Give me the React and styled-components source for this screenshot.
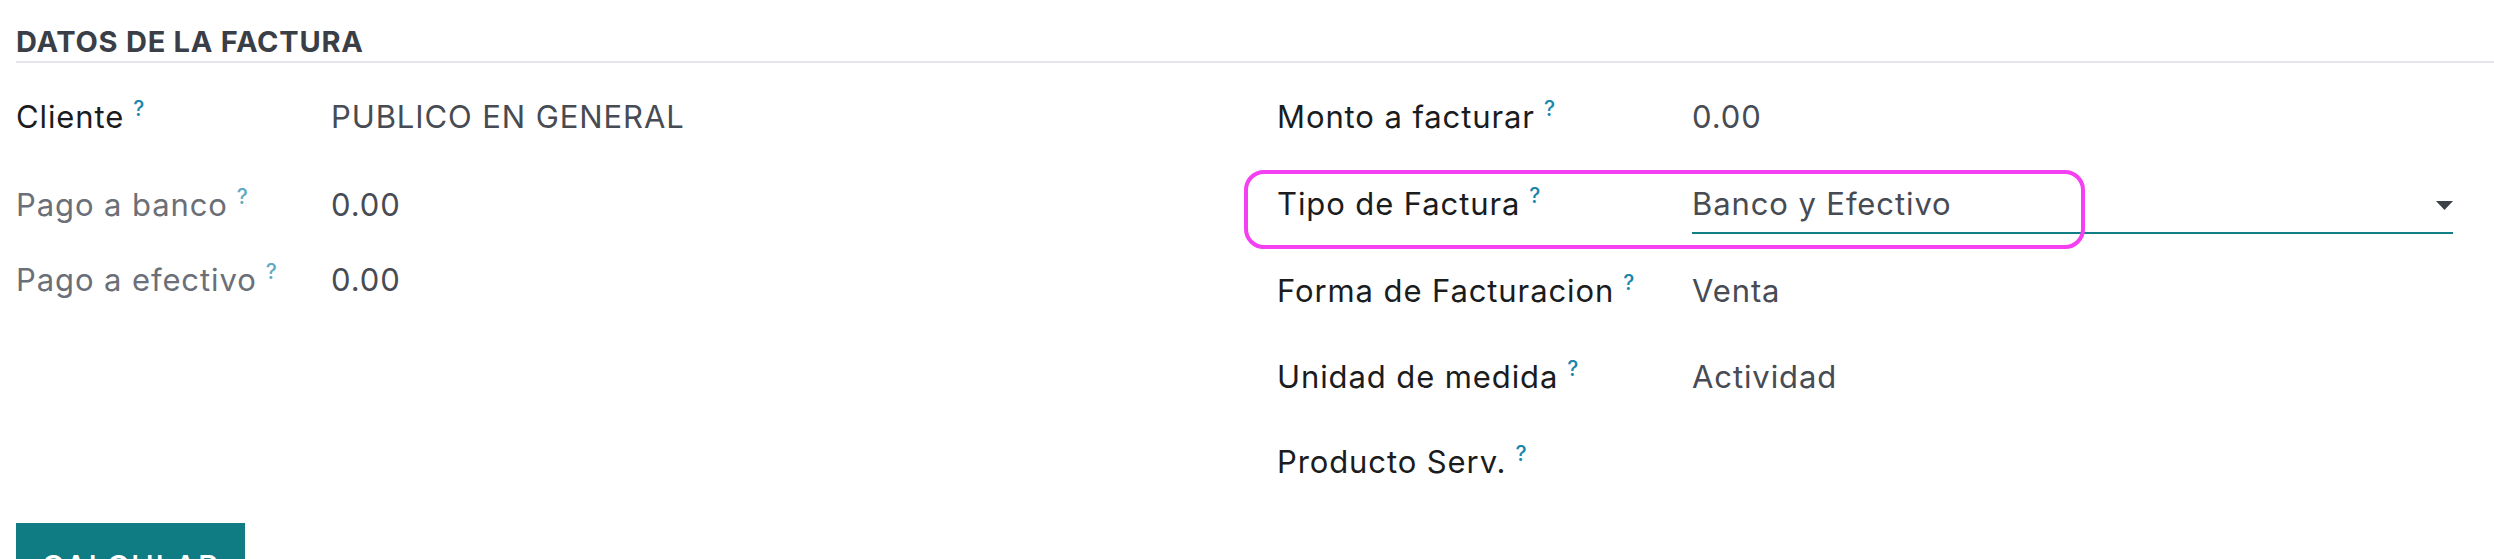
import React from 'react';
import styled, { createGlobalStyle } from 'styled-components';

const GlobalStyle = createGlobalStyle`
    body {
        margin: 0;
        background: #ffffff;
        font-family: Inter, "Noto Sans", sans-serif;
    }
`

const Page = styled.div`
    padding-left: 16px;
`

const SeparatorTitle = styled.div`
    padding-top: 24px;
    font-size: 29px;
    line-height: 35px;
    font-weight: 700;
    letter-spacing: 0.75px;
    color: #3a3e46;
    text-transform: uppercase;
`

const SeparatorLine = styled.div`
    height: 2px;
    margin-top: 2px;
    background: #e4e6e9;
`

const Groups = styled.div`
    display: grid;
    grid-template-columns: 1261px 1fr;
    padding-top: 36px;
    padding-right: 41px;
`

const Group = styled.div`
    display: flex;
    flex-direction: column;
    position: relative;
`

const Row = styled.div`
    display: grid;
    grid-template-columns: ${p => p.$labelWidth}px 1fr;
    align-items: start;
    height: ${p => p.$h}px;
    position: relative;
`

const Label = styled.div`
    font-size: 31px;
    line-height: 36px;
    letter-spacing: 0.9px;
    color: ${p => (p.$muted ? '#6b6f77' : '#1a1c20')};
    white-space: nowrap;
`

const Help = styled.sup`
    font-size: 21px;
    font-weight: 500;
    line-height: 0;
    vertical-align: 12px;
    margin-left: 9px;
    letter-spacing: 0;
    color: ${p => (p.$muted ? '#62aac4' : '#1a86ac')};
`

const Value = styled.div`
    font-size: 31px;
    line-height: 36px;
    letter-spacing: 0.9px;
    color: #474b53;
    white-space: nowrap;
`

const Select = styled.div`
    display: flex;
    justify-content: space-between;
    align-items: flex-start;
    padding-bottom: 10px;
    border-bottom: 2px solid #127f86;
`

const Arrow = styled.svg`
    width: 17px;
    height: 9px;
    margin-top: 15px;
    fill: #3c4047;
`

const Highlight = styled.div`
    position: absolute;
    left: -33px;
    top: -16px;
    width: 841px;
    height: 79px;
    box-sizing: border-box;
    border: 4px solid #f43ff2;
    border-radius: 20px;
    pointer-events: none;
`

const Button = styled.button`
    display: block;
    width: 229px;
    height: 70px;
    margin-top: 29px;
    padding: 17px 0 0;
    border: none;
    background: #0f7c84;
    color: #ffffff;
    font-family: Inter, "Noto Sans", sans-serif;
    font-size: 31px;
    font-weight: 500;
    letter-spacing: 1.5px;
    line-height: 36px;
    text-align: center;
    text-transform: uppercase;
`

const leftFields = [
    { label: 'Cliente', value: 'PUBLICO EN GENERAL', h: 88 },
    { label: 'Pago a banco', value: '0.00', h: 75, muted: true },
    { label: 'Pago a efectivo', value: '0.00', h: 75, muted: true },
];

const rightFields = [
    { label: 'Monto a facturar', value: '0.00', h: 87 },
    { label: 'Tipo de Factura', value: 'Banco y Efectivo', h: 87, select: true },
    { label: 'Forma de Facturacion', value: 'Venta', h: 86 },
    { label: 'Unidad de medida', value: 'Actividad', h: 85 },
    { label: 'Producto Serv.', value: '', h: 50 },
];

function Field({ field, labelWidth }) {
    return (
        <Row $labelWidth={labelWidth} $h={field.h}>
            {field.select && <Highlight />}
            <Label $muted={field.muted}>
                {field.label}
                <Help $muted={field.muted}>?</Help>
            </Label>
            {field.select ? (
                <Select>
                    <Value>{field.value}</Value>
                    <Arrow viewBox="0 0 17 9">
                        <polygon points="0,0 17,0 8.5,9" />
                    </Arrow>
                </Select>
            ) : (
                <Value>{field.value}</Value>
            )}
        </Row>
    );
}

function App() {
    return (
        <Page>
            <GlobalStyle />
            <SeparatorTitle>Datos de la factura</SeparatorTitle>
            <SeparatorLine />
            <Groups>
                <Group>
                    {leftFields.map(f => (
                        <Field key={f.label} field={f} labelWidth={315} />
                    ))}
                </Group>
                <Group>
                    {rightFields.map(f => (
                        <Field key={f.label} field={f} labelWidth={415} />
                    ))}
                </Group>
            </Groups>
            <Button>Calcular</Button>
        </Page>
    );
}

export default App;
